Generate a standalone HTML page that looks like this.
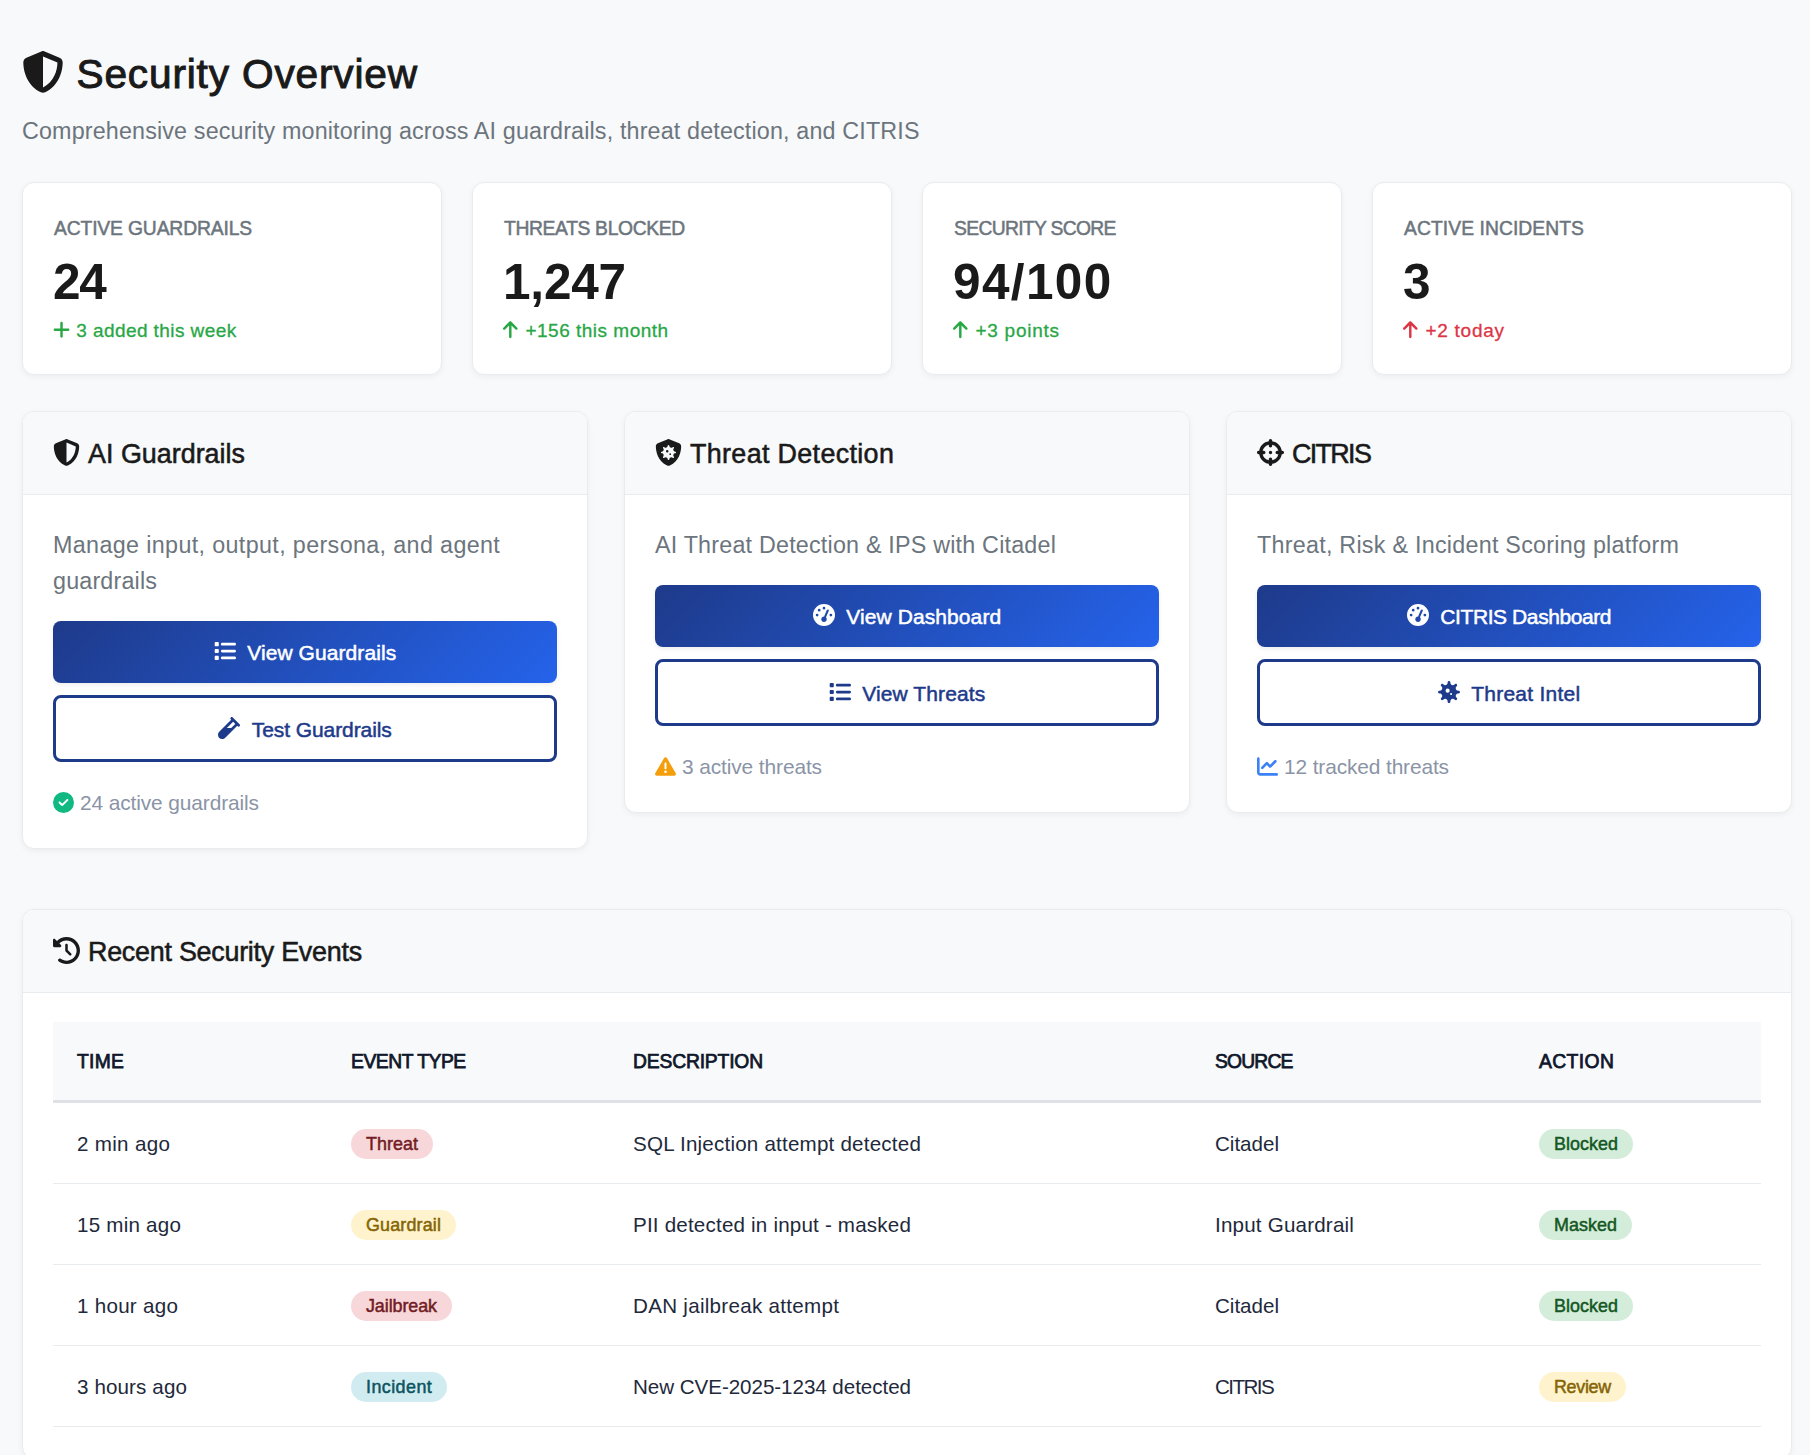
<!DOCTYPE html>
<html lang="en"><head><meta charset="utf-8"><title>Security Overview</title>
<style>
*{box-sizing:border-box}
html,body{margin:0;padding:0}
.wrap{position:relative;width:1810px;height:1455px;overflow:hidden;background:#f8f9fa}
body{background:#f8f9fa;font-family:"Liberation Sans",sans-serif;color:#212529}
.ic{display:inline-block;vertical-align:middle;flex:none}
.abs{position:absolute}
h1{position:absolute;left:22px;top:51px;margin:0;height:42px;font-size:40.6px;line-height:42px;font-weight:400;color:#1a1a1a;display:flex;align-items:center;-webkit-text-stroke:1px #1a1a1a}
h1 .ic{margin-right:12.5px}
h1 span{position:relative;top:1.5px}
.sub{position:absolute;left:22px;top:114.5px;font-size:23.3px;line-height:32px;color:#6c757d}
.card{position:absolute;background:#fff;border:1px solid #e9ecef;border-radius:12px;box-shadow:0 2px 6px rgba(0,0,0,.05)}
.stat{top:182px;width:420px;height:193px}
.stat .lbl{position:absolute;left:31px;top:34px;font-size:19.3px;line-height:24px;color:#6c757d;-webkit-text-stroke:0.5px #6c757d}
.stat .val{position:absolute;left:30px;top:71px;font-size:49.5px;line-height:56px;font-weight:700;color:#1a1a1a}
.stat .chg{position:absolute;left:30.3px;top:136px;font-size:19px;line-height:24px;display:flex;align-items:center;-webkit-text-stroke:0.3px currentColor}
.green{color:#28a745}.red{color:#dc3545}
.mod{top:411px;width:566px}
.hd{position:absolute;left:0;top:0;right:0;height:83px;background:#f8f9fa;border-bottom:1px solid #e9ecef;border-radius:11px 11px 0 0;display:flex;align-items:center;padding-left:30px;font-size:26.9px;color:#1a1a1a;-webkit-text-stroke:0.55px #1a1a1a}
.hd .ic{margin-right:8px;position:relative;top:-1px}
.hd span{position:relative;top:1px}
.desc{position:absolute;left:30px;font-size:23.3px;line-height:36px;color:#6c757d}
.btn{position:absolute;left:30px;width:504px;border-radius:8px;display:flex;align-items:center;justify-content:center;font-size:21px;-webkit-text-stroke:0.5px currentColor}
.btn .ic{margin-right:11.5px;position:relative;top:-0.7px}
.btn span{position:relative;top:1px}
.bp{box-shadow:0 2px 5px rgba(0,0,0,.07);height:61.5px;color:#fff;background:linear-gradient(135deg,#1e3a8a 0%,#2563eb 100%)}
.bo{height:67px;color:#1e3a8a;background:#fff;border:3px solid #1e3a8a}
.ft{position:absolute;left:30px;font-size:20.9px;line-height:28px;color:#8a94a6;display:flex;align-items:center}
.ft .ic{margin-right:6px;position:relative;top:-1px}
.ev{left:22px;top:909px;width:1770px;height:550px}
table{position:absolute;left:30px;top:112px;width:1708px;border-collapse:separate;border-spacing:0;table-layout:fixed}
th{height:81px;background:#f8f9fa;text-align:left;padding:0 0 0 24px;font-size:19.3px;font-weight:400;color:#0f172a;border-bottom:3px solid #dee2e6;-webkit-text-stroke:0.75px #0f172a}
th span{position:relative;top:1px}
td{height:81px;padding:2px 0 0 24px;font-size:20.6px;color:#1e293b;border-bottom:1px solid #e9ecef}
.bd{display:inline-block;height:30px;line-height:29px;border-radius:15px;padding:1px 15px 0;font-size:17.9px;-webkit-text-stroke:0.5px currentColor;vertical-align:middle}
.b-red{background:#f8d7da;color:#721c24}
.b-yel{background:#fff3cd;color:#856404}
.b-cy{background:#d1ecf1;color:#0c5460}
.b-gr{background:#d4edda;color:#155724}
</style></head>
<body>
<div class="wrap">
<h1><svg class="ic" width="42.00" height="42" viewBox="0 0 512 512" style=""><path fill="currentColor" d="M256 0c4.6 0 9.2 1 13.4 2.9L457.7 82.8c22 9.3 38.4 31 38.3 57.2c-.5 99.2-41.3 280.7-213.6 363.2c-16.7 8-36.1 8-52.8 0C57.3 420.7 16.5 239.2 16 140c-.1-26.2 16.3-47.9 38.3-57.2L242.7 2.900C246.800 1 251.400 0 256 0zm0 66.800V444.800C394 378 431.100 230.100 432 141.400L256 66.800z"/></svg><span style="white-space:nowrap;letter-spacing:0.850px;">Security Overview</span></h1><div class="sub"><span style="white-space:nowrap;letter-spacing:0.157px;">Comprehensive security monitoring across AI guardrails, threat detection, and CITRIS</span></div><div class="card stat" style="left:22.0px">
<div class="lbl"><span style="white-space:nowrap;letter-spacing:-0.143px;">ACTIVE GUARDRAILS</span></div>
<div class="val"><span style="white-space:nowrap;letter-spacing:-1.375px;">24</span></div>
<div class="chg green"><svg class="ic" width="17.06" height="19.5" viewBox="0 0 448 512" style="margin-right:6px;position:relative;top:-1.5px"><path fill="currentColor" d="M256 80c0-17.700-14.300-32-32-32s-32 14.300-32 32V224H48c-17.700 0-32 14.300-32 32s14.300 32 32 32H192V432c0 17.700 14.300 32 32 32s32-14.300 32-32V288H400c17.700 0 32-14.300 32-32s-14.300-32-32-32H256V80z"/></svg><span style="white-space:nowrap;letter-spacing:0.414px;">3 added this week</span></div>
</div><div class="card stat" style="left:472.0px">
<div class="lbl"><span style="white-space:nowrap;letter-spacing:-0.349px;">THREATS BLOCKED</span></div>
<div class="val"><span style="white-space:nowrap;letter-spacing:-0.194px;">1,247</span></div>
<div class="chg green"><svg class="ic" width="14.62" height="19.5" viewBox="0 0 384 512" style="margin-right:7.5px;position:relative;top:-1.5px"><path fill="currentColor" d="M214.600 41.400c-12.500-12.500-32.800-12.500-45.300 0l-160 160c-12.500 12.500-12.500 32.800 0 45.300s32.800 12.500 45.300 0L160 141.200V448c0 17.700 14.300 32 32 32s32-14.300 32-32V141.200L329.400 246.600c12.500 12.500 32.800 12.500 45.300 0s12.500-32.800 0-45.300l-160-160z"/></svg><span style="white-space:nowrap;letter-spacing:0.501px;">+156 this month</span></div>
</div><div class="card stat" style="left:922.0px">
<div class="lbl"><span style="white-space:nowrap;letter-spacing:-0.672px;">SECURITY SCORE</span></div>
<div class="val"><span style="white-space:nowrap;letter-spacing:1.381px;">94/100</span></div>
<div class="chg green"><svg class="ic" width="14.62" height="19.5" viewBox="0 0 384 512" style="margin-right:7.5px;position:relative;top:-1.5px"><path fill="currentColor" d="M214.600 41.400c-12.500-12.500-32.800-12.500-45.300 0l-160 160c-12.500 12.500-12.500 32.800 0 45.300s32.800 12.500 45.300 0L160 141.200V448c0 17.700 14.300 32 32 32s32-14.300 32-32V141.200L329.400 246.600c12.500 12.500 32.800 12.500 45.300 0s12.500-32.800 0-45.300l-160-160z"/></svg><span style="white-space:nowrap;letter-spacing:0.746px;">+3 points</span></div>
</div><div class="card stat" style="left:1372.0px">
<div class="lbl"><span style="white-space:nowrap;letter-spacing:0.070px;">ACTIVE INCIDENTS</span></div>
<div class="val"><span style="white-space:nowrap;letter-spacing:-2.531px;">3</span></div>
<div class="chg red"><svg class="ic" width="14.62" height="19.5" viewBox="0 0 384 512" style="margin-right:7.5px;position:relative;top:-1.5px"><path fill="currentColor" d="M214.600 41.400c-12.500-12.500-32.800-12.500-45.300 0l-160 160c-12.500 12.500-12.500 32.800 0 45.300s32.800 12.500 45.300 0L160 141.200V448c0 17.700 14.300 32 32 32s32-14.300 32-32V141.200L329.400 246.600c12.500 12.500 32.800 12.500 45.300 0s12.500-32.800 0-45.300l-160-160z"/></svg><span style="white-space:nowrap;letter-spacing:0.744px;">+2 today</span></div>
</div><div class="card mod" style="left:22px;height:438px"><div class="hd"><svg class="ic" width="27.00" height="27" viewBox="0 0 512 512" style=""><path fill="currentColor" d="M256 0c4.6 0 9.2 1 13.4 2.9L457.7 82.8c22 9.3 38.4 31 38.3 57.2c-.5 99.2-41.3 280.7-213.6 363.2c-16.7 8-36.1 8-52.8 0C57.3 420.7 16.5 239.2 16 140c-.1-26.2 16.3-47.9 38.3-57.2L242.7 2.900C246.800 1 251.400 0 256 0zm0 66.800V444.800C394 378 431.100 230.100 432 141.400L256 66.800z"/></svg><span style="white-space:nowrap;letter-spacing:0.006px;">AI Guardrails</span></div><div class="desc" style="top:115px"><span style="white-space:nowrap;letter-spacing:0.364px;">Manage input, output, persona, and agent</span></div><div class="desc" style="top:151px"><span style="white-space:nowrap;letter-spacing:0.178px;">guardrails</span></div><div class="btn bp" style="top:209px"><svg class="ic" width="22.00" height="22" viewBox="0 0 512 512" style=""><path fill="currentColor" d="M40 48c-13.3 0-24 10.7-24 24v48c0 13.3 10.7 24 24 24h48c13.3 0 24-10.7 24-24V72c0-13.3-10.7-24-24-24zm152 16c-17.7 0-32 14.3-32 32s14.3 32 32 32h288c17.7 0 32-14.3 32-32s-14.3-32-32-32zm0 160c-17.7 0-32 14.3-32 32s14.3 32 32 32h288c17.7 0 32-14.3 32-32s-14.3-32-32-32zm0 160c-17.7 0-32 14.3-32 32s14.3 32 32 32h288c17.7 0 32-14.3 32-32s-14.3-32-32-32zM16 232v48c0 13.3 10.7 24 24 24h48c13.3 0 24-10.7 24-24v-48c0-13.3-10.7-24-24-24H40c-13.3 0-24 10.7-24 24m24 136c-13.3 0-24 10.7-24 24v48c0 13.3 10.7 24 24 24h48c13.3 0 24-10.7 24-24v-48c0-13.3-10.7-24-24-24z"/></svg><span style="white-space:nowrap;letter-spacing:0.080px;">View Guardrails</span></div><div class="btn bo" style="top:283px"><svg class="ic" width="22.00" height="22" viewBox="0 0 512 512" style=""><path fill="currentColor" d="M342.6 9.4c-12.5-12.5-32.8-12.5-45.3 0s-12.5 32.8 0 45.3l9.4 9.3L28.1 342.6C10.1 360.6 0 385 0 410.5v5.5c0 53 43 96 96 96h5.5c25.5 0 49.9-10.1 67.9-28.1L448 205.3l9.4 9.4c12.5 12.5 32.8 12.5 45.3 0s12.5-32.8 0-45.3l-160-160zM205.3 256 352 109.3l50.7 50.7-96 96H205.2z"/></svg><span style="white-space:nowrap;letter-spacing:-0.084px;">Test Guardrails</span></div><div class="ft" style="top:377px"><svg class="ic" width="21.00" height="21" viewBox="0 0 512 512" style=""><path fill="#10b981" d="M256 512A256 256 0 1 0 256 0a256 256 0 1 0 0 512zM369 209L241 337c-9.400 9.400-24.600 9.400-33.900 0l-64-64c-9.400-9.400-9.400-24.600 0-33.900s24.600-9.400 33.900 0l47 47L335 175c9.400-9.400 24.600-9.400 33.900 0s9.400 24.600 0 33.900z"/></svg><span style="white-space:nowrap;letter-spacing:-0.111px;">24 active guardrails</span></div></div><div class="card mod" style="left:624px;height:402px"><div class="hd"><svg class="ic" width="27.00" height="27" viewBox="0 0 512 512" style=""><path fill="currentColor" d="M269.4 2.9C265.2 1 260.700 0 256 0s-9.200 1-13.400 2.900L54.300 82.800c-22 9.300-38.400 31-38.300 57.200c.5 99.200 41.300 280.700 213.600 363.200c16.700 8 36.100 8 52.800 0C454.700 420.700 495.500 239.200 496 140c.1-26.200-16.300-47.900-38.300-57.200L269.400 2.900zM256 112c8.800 0 16 7.200 16 16c0 33 39.900 49.500 63.200 26.200c6.200-6.200 16.400-6.200 22.600 0s6.200 16.400 0 22.600C334.500 200.100 351 240 384 240c8.800 0 16 7.200 16 16s-7.200 16-16 16c-33 0-49.500 39.900-26.200 63.200c6.200 6.200 6.200 16.400 0 22.600s-16.400 6.200-22.600 0C311.900 334.500 272 351 272 384c0 8.800-7.200 16-16 16s-16-7.200-16-16c0-33-39.900-49.500-63.200-26.200c-6.200 6.200-16.400 6.200-22.600 0s-6.200-16.400 0-22.600C177.500 311.900 161 272 128 272c-8.800 0-16-7.200-16-16s7.200-16 16-16c33 0 49.500-39.900 26.200-63.200c-6.200-6.200-6.200-16.400 0-22.600s16.400-6.200 22.600 0C200.100 177.500 240 161 240 128c0-8.800 7.200-16 16-16zM232 256a24 24 0 1 0 0-48 24 24 0 1 0 0 48zm72 32a16 16 0 1 0 -32 0 16 16 0 1 0 32 0z"/></svg><span style="white-space:nowrap;letter-spacing:0.336px;">Threat Detection</span></div><div class="desc" style="top:115px"><span style="white-space:nowrap;letter-spacing:0.207px;">AI Threat Detection &amp; IPS with Citadel</span></div><div class="btn bp" style="top:173px"><svg class="ic" width="22.00" height="22" viewBox="0 0 512 512" style=""><path fill="currentColor" d="M0 256a256 256 0 1 1 512 0A256 256 0 1 1 0 256zM288 96a32 32 0 1 0 -64 0 32 32 0 1 0 64 0zM256 416c35.300 0 64-28.700 64-64c0-17.400-6.900-33.100-18.100-44.600L366 161.700c5.300-12.100-.2-26.300-12.300-31.600s-26.300 .2-31.600 12.300L257.900 288c-.6 0-1.300 0-1.900 0c-35.300 0-64 28.700-64 64s28.700 64 64 64zM176 144a32 32 0 1 0 -64 0 32 32 0 1 0 64 0zM96 288a32 32 0 1 0 0-64 32 32 0 1 0 0 64zm352-32a32 32 0 1 0 -64 0 32 32 0 1 0 64 0z"/></svg><span style="white-space:nowrap;letter-spacing:0.095px;">View Dashboard</span></div><div class="btn bo" style="top:247px"><svg class="ic" width="22.00" height="22" viewBox="0 0 512 512" style=""><path fill="currentColor" d="M40 48c-13.3 0-24 10.7-24 24v48c0 13.3 10.7 24 24 24h48c13.3 0 24-10.7 24-24V72c0-13.3-10.7-24-24-24zm152 16c-17.7 0-32 14.3-32 32s14.3 32 32 32h288c17.7 0 32-14.3 32-32s-14.3-32-32-32zm0 160c-17.7 0-32 14.3-32 32s14.3 32 32 32h288c17.7 0 32-14.3 32-32s-14.3-32-32-32zm0 160c-17.7 0-32 14.3-32 32s14.3 32 32 32h288c17.7 0 32-14.3 32-32s-14.3-32-32-32zM16 232v48c0 13.3 10.7 24 24 24h48c13.3 0 24-10.7 24-24v-48c0-13.3-10.7-24-24-24H40c-13.3 0-24 10.7-24 24m24 136c-13.3 0-24 10.7-24 24v48c0 13.3 10.7 24 24 24h48c13.3 0 24-10.7 24-24v-48c0-13.3-10.7-24-24-24z"/></svg><span style="white-space:nowrap;letter-spacing:0.105px;">View Threats</span></div><div class="ft" style="top:341px"><svg class="ic" width="21.00" height="21" viewBox="0 0 512 512" style=""><path fill="#f59e0b" d="M256 32c14.200 0 27.300 7.500 34.500 19.800l216 368c7.300 12.400 7.300 27.700 .2 40.100S486.300 480 472 480H40c-14.300 0-27.600-7.700-34.700-20.100s-7-27.800 .2-40.100l216-368C228.700 39.500 241.800 32 256 32zm0 128c-13.300 0-24 10.700-24 24V296c0 13.300 10.700 24 24 24s24-10.700 24-24V184c0-13.300-10.700-24-24-24zm32 224a32 32 0 1 0 -64 0 32 32 0 1 0 64 0z"/></svg><span style="white-space:nowrap;letter-spacing:-0.108px;">3 active threats</span></div></div><div class="card mod" style="left:1226px;height:402px"><div class="hd"><svg class="ic" width="27.00" height="27" viewBox="0 0 512 512" style=""><path fill="currentColor" d="M256 0c17.700 0 32 14.300 32 32V42.400c93.700 13.900 167.700 88 181.600 181.600H480c17.700 0 32 14.300 32 32s-14.300 32-32 32H469.600c-13.900 93.700-88 167.700-181.600 181.600V480c0 17.700-14.300 32-32 32s-32-14.300-32-32V469.600C130.300 455.700 56.300 381.700 42.400 288H32c-17.700 0-32-14.300-32-32s14.300-32 32-32H42.400C56.300 130.300 130.300 56.300 224 42.400V32c0-17.700 14.300-32 32-32zM107.400 288c12.500 58.300 58.400 104.100 116.600 116.600V384c0-17.700 14.300-32 32-32s32 14.300 32 32v20.600c58.300-12.500 104.100-58.400 116.600-116.600H384c-17.700 0-32-14.300-32-32s14.300-32 32-32h20.600C392.100 165.700 346.300 119.900 288 107.400V128c0 17.700-14.300 32-32 32s-32-14.300-32-32V107.400C165.700 119.900 119.900 165.700 107.400 224H128c17.700 0 32 14.300 32 32s-14.300 32-32 32H107.400zM256 224a32 32 0 1 1 0 64 32 32 0 1 1 0-64z"/></svg><span style="white-space:nowrap;letter-spacing:-1.665px;">CITRIS</span></div><div class="desc" style="top:115px"><span style="white-space:nowrap;letter-spacing:0.259px;">Threat, Risk &amp; Incident Scoring platform</span></div><div class="btn bp" style="top:173px"><svg class="ic" width="22.00" height="22" viewBox="0 0 512 512" style=""><path fill="currentColor" d="M0 256a256 256 0 1 1 512 0A256 256 0 1 1 0 256zM288 96a32 32 0 1 0 -64 0 32 32 0 1 0 64 0zM256 416c35.300 0 64-28.700 64-64c0-17.400-6.900-33.100-18.100-44.600L366 161.700c5.300-12.100-.2-26.300-12.300-31.600s-26.300 .2-31.600 12.300L257.900 288c-.6 0-1.300 0-1.900 0c-35.300 0-64 28.700-64 64s28.700 64 64 64zM176 144a32 32 0 1 0 -64 0 32 32 0 1 0 64 0zM96 288a32 32 0 1 0 0-64 32 32 0 1 0 0 64zm352-32a32 32 0 1 0 -64 0 32 32 0 1 0 64 0z"/></svg><span style="white-space:nowrap;letter-spacing:-0.413px;">CITRIS Dashboard</span></div><div class="btn bo" style="top:247px"><svg class="ic" width="22.00" height="22" viewBox="0 0 512 512" style=""><path fill="currentColor" d="M288 32c0-17.700-14.300-32-32-32s-32 14.300-32 32V43.500c0 49.900-60.300 74.900-95.600 39.600L120.200 75C107.700 62.500 87.500 62.500 75 75s-12.500 32.800 0 45.300l8.200 8.200C118.400 163.700 93.400 224 43.500 224H32c-17.700 0-32 14.300-32 32s14.300 32 32 32H43.500c49.900 0 74.900 60.300 39.600 95.600L75 391.800c-12.500 12.500-12.500 32.800 0 45.300s32.800 12.500 45.300 0l8.200-8.200c35.300-35.300 95.600-10.300 95.600 39.600V480c0 17.700 14.300 32 32 32s32-14.300 32-32V468.500c0-49.900 60.300-74.900 95.600-39.600l8.200 8.200c12.500 12.500 32.800 12.500 45.300 0s12.500-32.800 0-45.300l-8.200-8.200c-35.300-35.300-10.300-95.600 39.600-95.600H480c17.700 0 32-14.300 32-32s-14.300-32-32-32H468.500c-49.900 0-74.900-60.300-39.600-95.600l8.200-8.200c12.500-12.500 12.500-32.800 0-45.300s-32.800-12.500-45.300 0l-8.200 8.200C348.300 118.400 288 93.400 288 43.500V32zM176 224a48 48 0 1 1 96 0 48 48 0 1 1 -96 0zm128 56a24 24 0 1 1 0 48 24 24 0 1 1 0-48z"/></svg><span style="white-space:nowrap;letter-spacing:0.240px;">Threat Intel</span></div><div class="ft" style="top:341px"><svg class="ic" width="21.00" height="21" viewBox="0 0 512 512" style=""><path fill="#3b82f6" d="M64 64c0-17.7-14.3-32-32-32S0 46.3 0 64v336c0 44.2 35.8 80 80 80h400c17.7 0 32-14.3 32-32s-14.3-32-32-32H80c-8.8 0-16-7.2-16-16zm406.6 86.600c12.500-12.500 12.500-32.800 0-45.300s-32.800-12.500-45.300 0L320 210.700l-57.400-57.300c-12.500-12.500-32.800-12.500-45.300 0l-112 112c-12.500 12.500-12.500 32.800 0 45.300s32.800 12.500 45.300 0L240 221.300l57.400 57.400c12.500 12.500 32.800 12.500 45.300 0l128-128z"/></svg><span style="white-space:nowrap;letter-spacing:-0.127px;">12 tracked threats</span></div></div><div class="card ev"><div class="hd"><svg class="ic" width="27.00" height="27" viewBox="0 0 512 512" style=""><path fill="currentColor" d="M75 75L41 41C25.900 25.900 0 36.600 0 57.900V168c0 13.300 10.700 24 24 24H134.100c21.400 0 32.100-25.900 17-41l-30.800-30.800C155 85.500 203 64 256 64c106 0 192 86 192 192s-86 192-192 192c-40.800 0-78.600-12.700-109.700-34.400c-14.500-10.100-34.400-6.600-44.600 7.900s-6.600 34.400 7.900 44.600C151.200 495 201.700 512 256 512c141.400 0 256-114.600 256-256S397.400 0 256 0C185.300 0 121.300 28.700 75 75zm181 53c-13.300 0-24 10.700-24 24V256c0 6.400 2.500 12.500 7 17l72 72c9.400 9.400 24.600 9.400 33.900 0s9.400-24.600 0-33.900l-65-65V152c0-13.300-10.700-24-24-24z"/></svg><span style="white-space:nowrap;letter-spacing:-0.256px;">Recent Security Events</span></div><table><colgroup><col style="width:274px"><col style="width:282px"><col style="width:582px"><col style="width:324px"><col></colgroup><thead><tr><th><span style="white-space:nowrap;letter-spacing:0.268px;">TIME</span></th><th><span style="white-space:nowrap;letter-spacing:-0.454px;">EVENT TYPE</span></th><th><span style="white-space:nowrap;letter-spacing:-0.170px;">DESCRIPTION</span></th><th><span style="white-space:nowrap;letter-spacing:-0.818px;">SOURCE</span></th><th><span style="white-space:nowrap;letter-spacing:0.392px;">ACTION</span></th></tr></thead><tbody><tr><td><span style="white-space:nowrap;letter-spacing:0.300px;">2 min ago</span></td><td><span class="bd b-red"><span style="white-space:nowrap;letter-spacing:0.051px;">Threat</span></span></td><td><span style="white-space:nowrap;letter-spacing:0.203px;">SQL Injection attempt detected</span></td><td><span style="white-space:nowrap;letter-spacing:-0.017px;">Citadel</span></td><td><span class="bd b-gr"><span style="white-space:nowrap;letter-spacing:0.053px;">Blocked</span></span></td></tr><tr><td><span style="white-space:nowrap;letter-spacing:0.220px;">15 min ago</span></td><td><span class="bd b-yel"><span style="white-space:nowrap;letter-spacing:0.165px;">Guardrail</span></span></td><td><span style="white-space:nowrap;letter-spacing:0.188px;">PII detected in input - masked</span></td><td><span style="white-space:nowrap;letter-spacing:0.191px;">Input Guardrail</span></td><td><span class="bd b-gr"><span style="white-space:nowrap;letter-spacing:0.062px;">Masked</span></span></td></tr><tr><td><span style="white-space:nowrap;letter-spacing:0.265px;">1 hour ago</span></td><td><span class="bd b-red"><span style="white-space:nowrap;letter-spacing:-0.072px;">Jailbreak</span></span></td><td><span style="white-space:nowrap;letter-spacing:0.278px;">DAN jailbreak attempt</span></td><td><span style="white-space:nowrap;letter-spacing:-0.017px;">Citadel</span></td><td><span class="bd b-gr"><span style="white-space:nowrap;letter-spacing:0.053px;">Blocked</span></span></td></tr><tr><td><span style="white-space:nowrap;letter-spacing:0.116px;">3 hours ago</span></td><td><span class="bd b-cy"><span style="white-space:nowrap;letter-spacing:0.444px;">Incident</span></span></td><td><span style="white-space:nowrap;letter-spacing:-0.053px;">New CVE-2025-1234 detected</span></td><td><span style="white-space:nowrap;letter-spacing:-1.548px;">CITRIS</span></td><td><span class="bd b-yel"><span style="white-space:nowrap;letter-spacing:-0.304px;">Review</span></span></td></tr></tbody></table></div>
</div>
</body></html>
